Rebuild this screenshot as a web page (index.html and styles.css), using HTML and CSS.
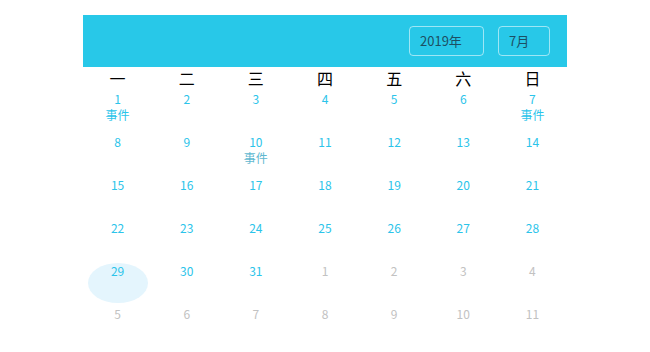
FILE: index.html
```html
<!DOCTYPE html>
<html lang="zh">
<head>
<meta charset="utf-8">
<link rel="stylesheet" href="styles.css">
</head>
<body>
<div class="cal">
  <div class="head">
    <div class="sel sel-year">2019年</div>
    <div class="sel sel-month">7月</div>
  </div>
  <div class="week">
    <div>一</div><div>二</div><div>三</div><div>四</div><div>五</div><div>六</div><div>日</div>
  </div>
  <div class="days">
    <div class="d"><span>1</span><span class="ev">事件</span></div>
    <div class="d"><span>2</span></div>
    <div class="d"><span>3</span></div>
    <div class="d"><span>4</span></div>
    <div class="d"><span>5</span></div>
    <div class="d"><span>6</span></div>
    <div class="d"><span>7</span><span class="ev">事件</span></div>
    <div class="d"><span>8</span></div>
    <div class="d"><span>9</span></div>
    <div class="d"><span>10</span><span class="ev ev-muted">事件</span></div>
    <div class="d"><span>11</span></div>
    <div class="d"><span>12</span></div>
    <div class="d"><span>13</span></div>
    <div class="d"><span>14</span></div>
    <div class="d"><span>15</span></div>
    <div class="d"><span>16</span></div>
    <div class="d"><span>17</span></div>
    <div class="d"><span>18</span></div>
    <div class="d"><span>19</span></div>
    <div class="d"><span>20</span></div>
    <div class="d"><span>21</span></div>
    <div class="d"><span>22</span></div>
    <div class="d"><span>23</span></div>
    <div class="d"><span>24</span></div>
    <div class="d"><span>25</span></div>
    <div class="d"><span>26</span></div>
    <div class="d"><span>27</span></div>
    <div class="d"><span>28</span></div>
    <div class="d today"><span>29</span></div>
    <div class="d"><span>30</span></div>
    <div class="d"><span>31</span></div>
    <div class="d other"><span>1</span></div>
    <div class="d other"><span>2</span></div>
    <div class="d other"><span>3</span></div>
    <div class="d other"><span>4</span></div>
    <div class="d other"><span>5</span></div>
    <div class="d other"><span>6</span></div>
    <div class="d other"><span>7</span></div>
    <div class="d other"><span>8</span></div>
    <div class="d other"><span>9</span></div>
    <div class="d other"><span>10</span></div>
    <div class="d other"><span>11</span></div>
  </div>
</div>
</body>
</html>
```
FILE: styles.css
```css
html, body {
  margin: 0;
  padding: 0;
  background: #fff;
}
body {
  font-family: "Noto Sans CJK SC", "Noto Sans", sans-serif;
}
.cal {
  width: 484px;
  margin: 15px 0 0 83px;
}
.head {
  height: 52px;
  background: #28c8e8;
  display: flex;
  justify-content: flex-end;
  align-items: center;
  gap: 14px;
  padding-right: 17px;
  box-sizing: border-box;
}
.sel {
  height: 30px;
  box-sizing: border-box;
  border: 1px solid rgba(255, 255, 255, 0.55);
  border-radius: 4px;
  font-size: 13px;
  line-height: 28px;
  color: #1d4f63;
  padding-left: 10px;
}
.sel-year { width: 75px; }
.sel-month { width: 52px; }
.week {
  display: grid;
  grid-template-columns: repeat(7, 1fr);
  height: 22px;
  align-items: center;
  text-align: center;
  font-size: 16px;
  line-height: 22px;
  color: #000;
}
.days {
  display: grid;
  grid-template-columns: repeat(7, 1fr);
  grid-auto-rows: 43px;
}
.d {
  position: relative;
  display: flex;
  flex-direction: column;
  align-items: center;
  padding-top: 2px;
  font-size: 12px;
  line-height: 16px;
  color: #2bc4ea;
}
.d span { position: relative; }
.ev { color: #2bc4ea; }
.ev-muted { color: #5fb8d0; }
.other { color: #c2c2c2; }
.today::before {
  content: "";
  position: absolute;
  left: 50%;
  top: 2px;
  width: 60px;
  height: 40px;
  margin-left: -30px;
  border-radius: 50%;
  background: #e4f5fd;
}
```
